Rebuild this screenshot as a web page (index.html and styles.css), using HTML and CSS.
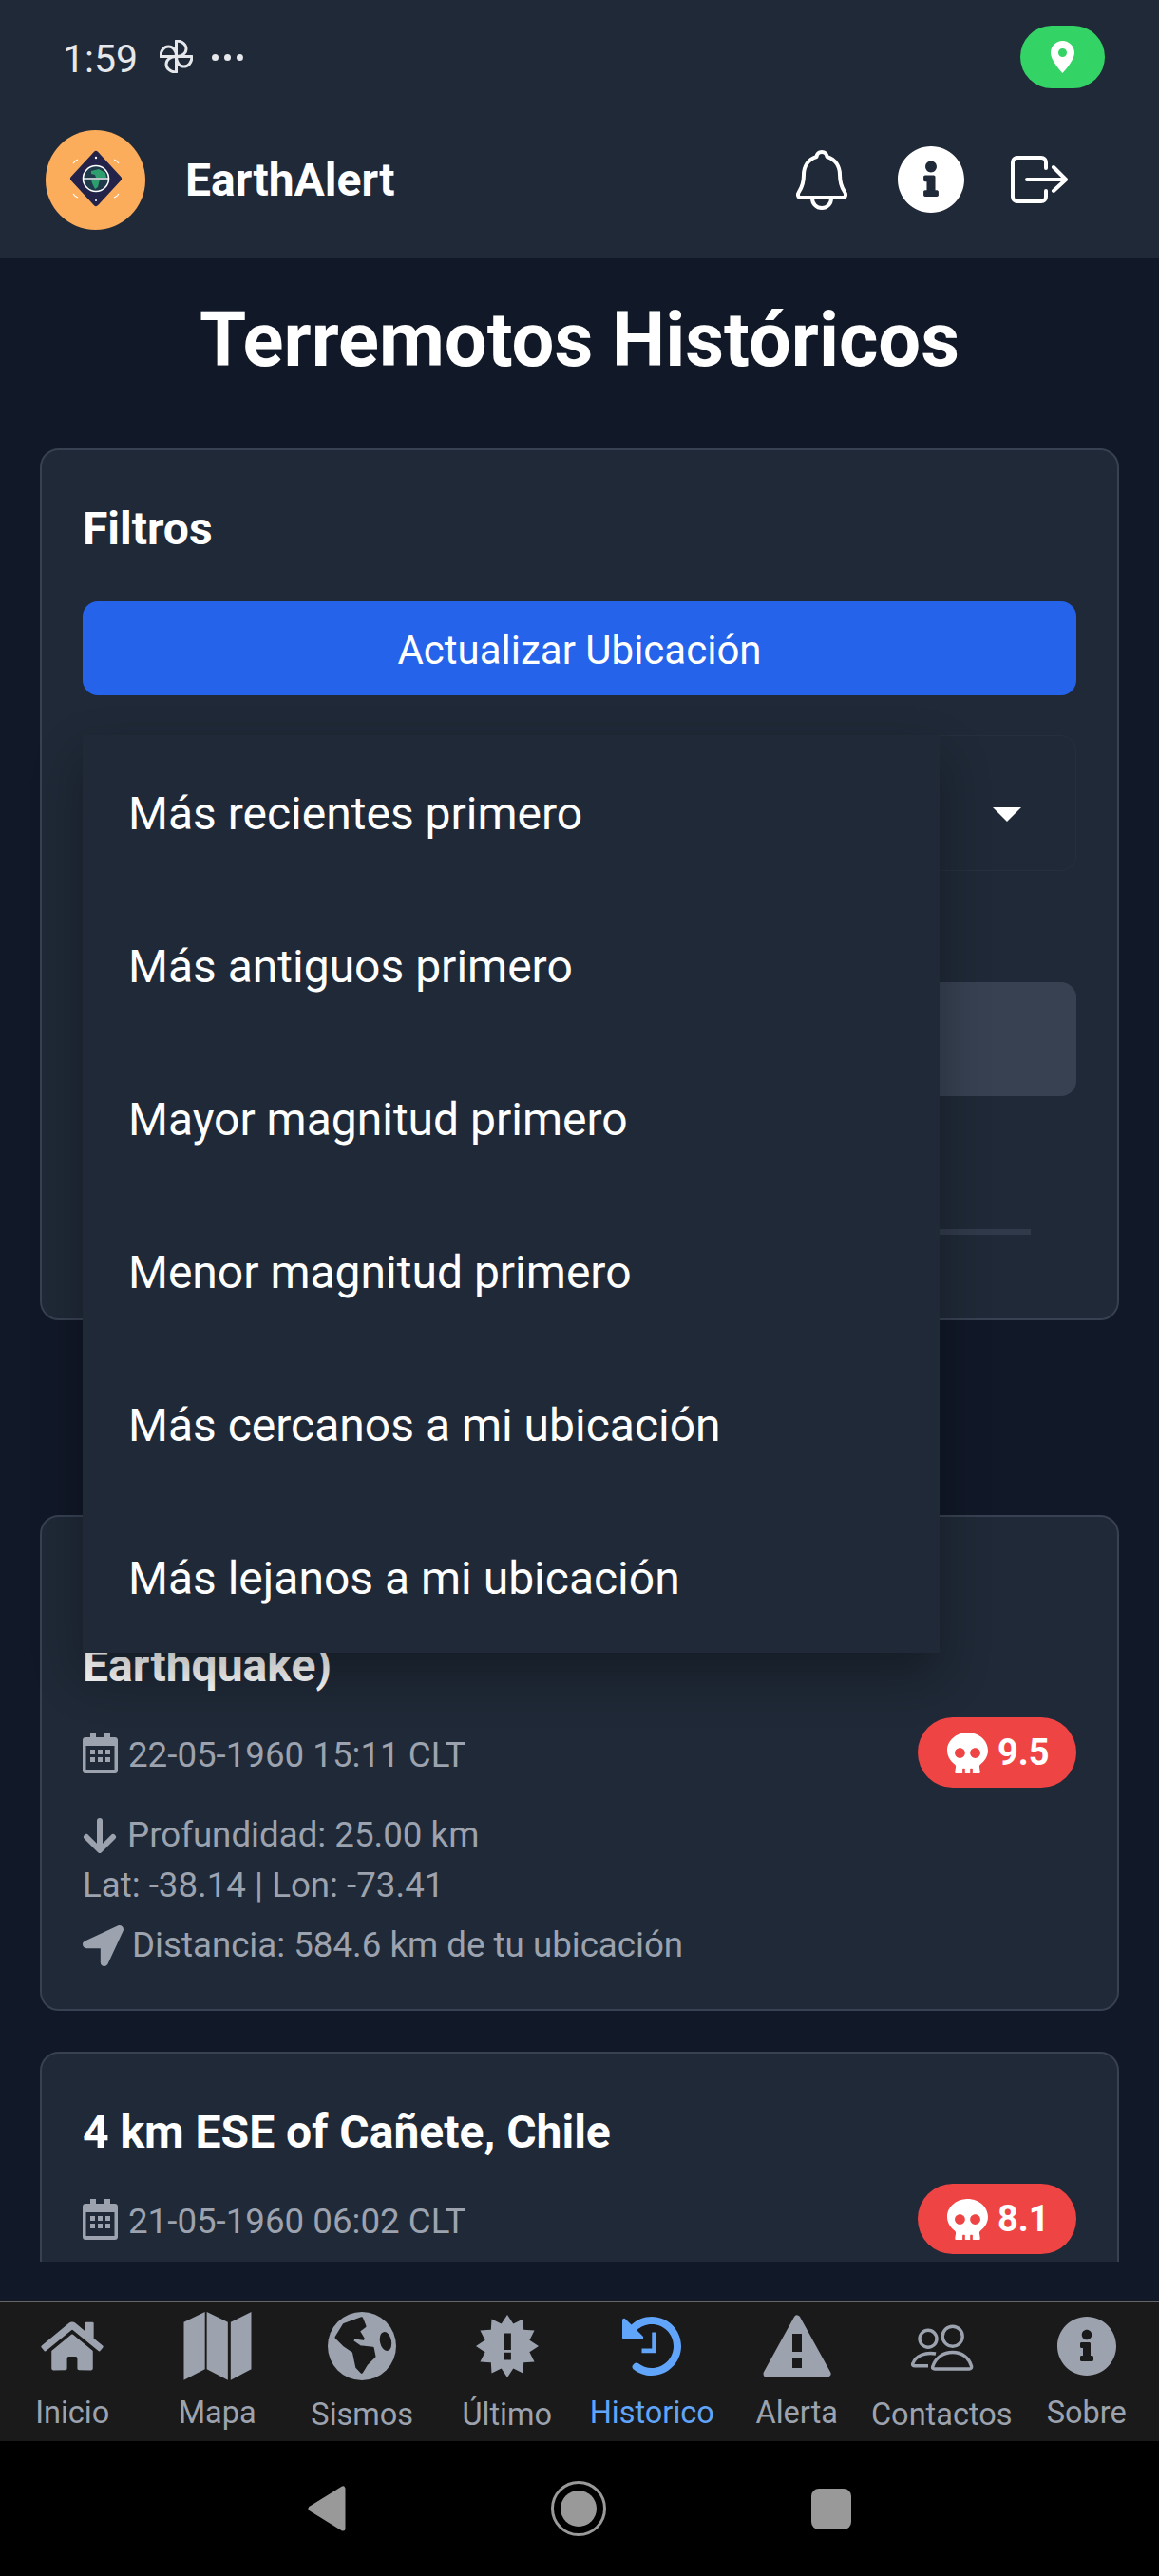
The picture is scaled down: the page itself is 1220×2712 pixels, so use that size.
FILE: index.html
```html
<!DOCTYPE html>
<html lang="es">
<head>
    <meta charset="UTF-8">
    <meta name="viewport" content="width=device-width, initial-scale=1.0">
    <title>EarthAlert</title>
    <link rel="stylesheet" href="styles.css">
</head>
<body>
    <div class="top">
        <!--status bar-->
        <div class="status">
            <span class="status-time">1:59</span>
            <svg class="ic-fan" viewBox="0 0 35 35">
                <path d="M17.500 17.500H34C34 24 30 28 25.700 28C21 28 17.500 24 17.500 17.500Z"/>
                <path transform="rotate(90 17.500 17.500)" d="M17.500 17.500H34C34 24 30 28 25.700 28C21 28 17.500 24 17.500 17.500Z"/>
                <path transform="rotate(180 17.500 17.500)" d="M17.500 17.500H34C34 24 30 28 25.700 28C21 28 17.500 24 17.500 17.500Z"/>
                <path transform="rotate(270 17.500 17.500)" d="M17.500 17.500H34C34 24 30 28 25.700 28C21 28 17.500 24 17.500 17.500Z"/>
            </svg>
            <span class="status-dots"><i></i><i></i><i></i></span>
            <span class="status-pill">
                <svg class="ic-pin" viewBox="0 0 25 34"><path fill-rule="evenodd" d="M12.500 0C5.600 0 0 5.600 0 12.500 0 21 12.500 34 12.500 34S25 21 25 12.500C25 5.600 19.400 0 12.500 0zm0 8a4.500 4.500 0 1 1 0 9 4.500 4.500 0 0 1 0-9z"/></svg>
            </span>
        </div>
        <!--app bar-->
        <header class="appbar">
            <svg class="logo" viewBox="0 0 105 105">
                <circle cx="52.500" cy="52.500" r="52.500" fill="#fbad5c"/>
                <path d="M53 25L77 51L53 77L29 51Z" fill="#23234a" stroke="#23234a" stroke-width="6" stroke-linejoin="round"/>
                <circle cx="53" cy="51" r="13.500" fill="#1f3a4a" stroke="#fff" stroke-width="1.600"/>
                <path d="M48 43l8-2 7 4 1 5H53l-1-3-4-1zM48 52h9l-2 8-3 2-3-6z" fill="#2f9e6e"/>
                <path d="M39.500 51H66.500" stroke="#fff" stroke-width="1.400"/>
                <path d="M29 35q2-3 5-4M72 31q3 1 5 4M29 67q2 3 5 4M72 71q3-1 5-4" fill="none" stroke="#fff" stroke-width="1.200"/>
                <circle cx="53" cy="29" r="1.200" fill="#fff"/>
                <circle cx="53" cy="74" r="1" fill="#fff"/>
            </svg>
            <span class="brand">EarthAlert</span>
            <span class="appbar-actions">
                <svg class="ic-bell" viewBox="0 0 54 63"><path d="M27 2C24 2 22 4 21.500 7 12 10 8 18 8 26c0 8-1 12-5 18-2 3-1 6 2 6h44c3 0 4-3 2-6-4-6-5-10-5-18 0-8-4-16-13.500-19C32 4 30 2 27 2zM17 51a10 10 0 0 0 20 0"/></svg>
                <svg class="ic-info" viewBox="8 8 496 496"><path d="M256 8C119.043 8 8 119.083 8 256c0 136.997 111.043 248 248 248s248-111.003 248-248C504 119.083 392.957 8 256 8zm0 110c23.196 0 42 18.804 42 42s-18.804 42-42 42-42-18.804-42-42 18.804-42 42-42zm56 254c0 6.627-5.373 12-12 12h-88c-6.627 0-12-5.373-12-12v-24c0-6.627 5.373-12 12-12h12v-64h-12c-6.627 0-12-5.373-12-12v-24c0-6.627 5.373-12 12-12h64c6.627 0 12 5.373 12 12v100h12c6.627 0 12 5.373 12 12v24z"/></svg>
                <svg class="ic-logout" viewBox="0 0 60 50"><path d="M37 13V7c0-3-2-5-5-5H7C4 2 2 4 2 7v36c0 3 2 5 5 5h25c3 0 5-2 5-5v-6M17 25h40M45 12l13 13-13 12"/></svg>
            </span>
        </header>
    </div>

    <main class="main">
        <div class="scroll">
            <h1 class="page-title">Terremotos Históricos</h1>

            <!--filters-->
            <section class="card filters">
                <h2 class="filters-title">Filtros</h2>
                <button type="button" class="btn-location">Actualizar Ubicación</button>
                <div class="select"><span class="select-arrow"></span></div>
                <div class="btn-grey"></div>
                <div class="slider"></div>
            </section>

            <!--quake list-->
            <article class="card quake quake-first">
                <h3 class="quake-title">Earthquake)</h3>
                <div class="quake-row">
                    <span class="quake-date">
                        <svg class="ic-cal" viewBox="0 0 37 43"><path fill-rule="evenodd" d="M8 0h6v5h9V0h6v5h5c1.700 0 3 1.300 3 3v32c0 1.700-1.300 3-3 3H3c-1.700 0-3-1.300-3-3V8c0-1.700 1.300-3 3-3h5zM3.500 14v25h30V14z"/><path d="M8 18h5v5H8zM16 18h5v5h-5zM24 18h5v5h-5zM8 26h5v5H8zM16 26h5v5h-5zM24 26h5v5h-5z"/></svg>
                        22-05-1960 15:11 CLT
                    </span>
                    <span class="badge">
                        <svg class="ic-skull" viewBox="0 0 512 512"><path d="M256 0C114.600 0 0 100.300 0 224c0 70.100 36.900 132.600 94.500 173.700 9.600 6.900 15.200 18.100 13.500 29.900l-9.400 66.200c-1.400 9.600 6 18.200 15.700 18.200H192v-56c0-4.400 3.600-8 8-8h16c4.400 0 8 3.600 8 8v56h64v-56c0-4.400 3.600-8 8-8h16c4.400 0 8 3.600 8 8v56h77.700c9.700 0 17.100-8.600 15.700-18.200l-9.400-66.200c-1.700-11.700 3.800-23 13.500-29.900C475.100 356.600 512 294.100 512 224 512 100.300 397.400 0 256 0zm-96 320c-35.300 0-64-28.700-64-64s28.700-64 64-64 64 28.700 64 64-28.700 64-64 64zm192 0c-35.300 0-64-28.700-64-64s28.700-64 64-64 64 28.700 64 64-28.700 64-64 64z"/></svg>
                        9.5
                    </span>
                </div>
                <p class="quake-line quake-depth">
                    <svg class="ic-down" viewBox="0 0 36 37"><path d="M18 3V33M4 20L18 34L32 20"/></svg>
                    Profundidad: 25.00 km
                </p>
                <p class="quake-line quake-coords">Lat: -38.14 | Lon: -73.41</p>
                <p class="quake-line quake-dist">
                    <svg class="ic-plane" viewBox="0 0 512 512"><path d="M444.520 3.520L28.740 195.420c-47.970 22.390-31.980 92.750 19.190 92.750h175.910v175.910c0 51.170 70.360 67.170 92.750 19.190l191.900-415.780c15.990-38.390-25.590-79.970-63.970-63.970z"/></svg>
                    Distancia: 584.6 km de tu ubicación
                </p>
            </article>

            <article class="card quake">
                <h3 class="quake-title">4 km ESE of Cañete, Chile</h3>
                <div class="quake-row">
                    <span class="quake-date">
                        <svg class="ic-cal" viewBox="0 0 37 43"><path fill-rule="evenodd" d="M8 0h6v5h9V0h6v5h5c1.700 0 3 1.300 3 3v32c0 1.700-1.300 3-3 3H3c-1.700 0-3-1.300-3-3V8c0-1.700 1.300-3 3-3h5zM3.500 14v25h30V14z"/><path d="M8 18h5v5H8zM16 18h5v5h-5zM24 18h5v5h-5zM8 26h5v5H8zM16 26h5v5h-5zM24 26h5v5h-5z"/></svg>
                        21-05-1960 06:02 CLT
                    </span>
                    <span class="badge">
                        <svg class="ic-skull" viewBox="0 0 512 512"><path d="M256 0C114.600 0 0 100.300 0 224c0 70.100 36.900 132.600 94.500 173.700 9.600 6.900 15.200 18.100 13.500 29.900l-9.400 66.200c-1.400 9.600 6 18.200 15.700 18.200H192v-56c0-4.400 3.600-8 8-8h16c4.400 0 8 3.600 8 8v56h64v-56c0-4.400 3.600-8 8-8h16c4.400 0 8 3.600 8 8v56h77.700c9.700 0 17.100-8.600 15.700-18.200l-9.400-66.200c-1.700-11.700 3.800-23 13.500-29.900C475.100 356.600 512 294.100 512 224 512 100.300 397.400 0 256 0zm-96 320c-35.300 0-64-28.700-64-64s28.700-64 64-64 64 28.700 64 64-28.700 64-64 64zm192 0c-35.300 0-64-28.700-64-64s28.700-64 64-64 64 28.700 64 64-28.700 64-64 64z"/></svg>
                        8.1
                    </span>
                </div>
            </article>

            <!--sort menu, open over the filters-->
            <ul class="menu">
                <li>Más recientes primero</li>
                <li>Más antiguos primero</li>
                <li>Mayor magnitud primero</li>
                <li>Menor magnitud primero</li>
                <li>Más cercanos a mi ubicación</li>
                <li>Más lejanos a mi ubicación</li>
            </ul>
        </div>
    </main>

    <!--bottom tabs-->
    <nav class="tabs">
        <div class="tab">
            <span class="tab-icon"><svg class="ic-home" viewBox="0 0 576 512"><path d="M280.370 148.260L96 300.110V464a16 16 0 0 0 16 16l112.060-.29a16 16 0 0 0 15.920-16V368a16 16 0 0 1 16-16h64a16 16 0 0 1 16 16v95.640a16 16 0 0 0 16 16.050L464 480a16 16 0 0 0 16-16V300L295.670 148.260a12.190 12.190 0 0 0-15.300 0zM571.600 251.470L488 182.560V44.050a12 12 0 0 0-12-12h-56a12 12 0 0 0-12 12v72.610L318.470 43a48 48 0 0 0-61 0L4.340 251.470a12 12 0 0 0-1.600 16.900l25.500 31A12 12 0 0 0 45.150 301l235.220-193.740a12.190 12.190 0 0 1 15.300 0L530.900 301a12 12 0 0 0 16.900-1.600l25.500-31a12 12 0 0 0-1.700-16.930z"/></svg></span>
            <span class="tab-label">Inicio</span>
        </div>
        <div class="tab">
            <span class="tab-icon"><svg class="ic-map" viewBox="0 0 72 73"><path d="M0 11L22.500 0V61L0 72.700zM24.500 0L47 11V72.700L24.500 61zM50 11L72 0V61L50 72.700z"/></svg></span>
            <span class="tab-label">Mapa</span>
        </div>
        <div class="tab tab-low">
            <span class="tab-icon"><svg class="ic-globe" viewBox="0 0 72 72"><circle cx="36" cy="36" r="36"/><path class="cut" d="M9 26.700L17.300 13.300L35.700 6.700L39 15L32.300 20L37.300 28.300L27.300 26.700L25.700 31L34 36.700L47.300 38.300L49 46.700L40.700 55L35.700 63.300L30.700 58L27.300 41.700L17.300 35Z"/><ellipse class="cut" cx="61" cy="31" rx="4.500" ry="8.500" transform="rotate(-12 61 31)"/></svg></span>
            <span class="tab-label">Sismos</span>
        </div>
        <div class="tab tab-low">
            <span class="tab-icon"><svg class="ic-burst" viewBox="0 0 68 70"><path d="M34 1L40.500 10.900L51 5.600L51.700 17.300L63.400 18L58.100 28.500L68 35L58.100 41.500L63.400 52L51.700 52.700L51 64.400L40.500 59.100L34 69L27.500 59.100L17 64.400L16.300 52.700L4.600 52L9.900 41.500L0 35L9.900 28.500L4.600 18L16.300 17.300L17 5.600L27.500 10.900Z"/><path class="fill-cut" d="M30 21h8v18h-8zM30 42h8v8h-8z"/></svg></span>
            <span class="tab-label">Último</span>
        </div>
        <div class="tab tab-active">
            <span class="tab-icon"><svg class="ic-history" viewBox="8 8 496 496"><path d="M504 255.531c.253 136.640-111.180 248.372-247.820 248.468-59.015.042-113.223-20.530-155.822-54.911-11.077-8.940-11.905-25.541-1.839-35.607l11.267-11.267c8.609-8.609 22.353-9.551 31.891-1.984C173.062 425.135 212.781 440 256 440c101.705 0 184-82.311 184-184 0-101.705-82.311-184-184-184-48.814 0-93.149 18.969-126.068 49.932l50.754 50.754c10.080 10.080 2.941 27.314-11.313 27.314H24c-8.837 0-16-7.163-16-16V38.627c0-14.254 17.234-21.393 27.314-11.314l49.372 49.372C129.209 34.136 189.552 8 256 8c136.810 0 247.747 110.780 248 247.531z"/><path class="hand" d="M277 140V295H172"/></svg></span>
            <span class="tab-label">Historico</span>
        </div>
        <div class="tab">
            <span class="tab-icon"><svg class="ic-alert" viewBox="0 0 72 66"><path d="M36 4L68 62H4Z" stroke-width="7" stroke-linejoin="round" class="tri"/><path class="fill-cut" d="M31 20h10v19H31zM31 46h10v10H31z"/></svg></span>
            <span class="tab-label">Alerta</span>
        </div>
        <div class="tab tab-low">
            <span class="tab-icon"><svg class="ic-people" viewBox="0 0 67 49"><circle cx="19" cy="15.300" r="9"/><circle cx="44.700" cy="12.700" r="10.500"/><path d="M26 47c-2 0-3-1-2-3 3-9 11-14.500 20.700-14.500S62 35 64.500 44c.5 2-.5 3-2.500 3zM27 31C16 29 6 33 3 41c-1 2 0 2.700 2 2.700h14"/></svg></span>
            <span class="tab-label">Contactos</span>
        </div>
        <div class="tab">
            <span class="tab-icon"><svg class="ic-sobre" viewBox="8 8 496 496"><path d="M256 8C119.043 8 8 119.083 8 256c0 136.997 111.043 248 248 248s248-111.003 248-248C504 119.083 392.957 8 256 8zm0 110c23.196 0 42 18.804 42 42s-18.804 42-42 42-42-18.804-42-42 18.804-42 42-42zm56 254c0 6.627-5.373 12-12 12h-88c-6.627 0-12-5.373-12-12v-24c0-6.627 5.373-12 12-12h12v-64h-12c-6.627 0-12-5.373-12-12v-24c0-6.627 5.373-12 12-12h64c6.627 0 12 5.373 12 12v100h12c6.627 0 12 5.373 12 12v24z"/></svg></span>
            <span class="tab-label">Sobre</span>
        </div>
    </nav>

    <!--android buttons-->
    <div class="sysbar">
        <svg class="sys-back" viewBox="0 0 40 48"><path d="M37 3V45L3 24Z"/></svg>
        <svg class="sys-home" viewBox="0 0 58 58"><circle cx="29" cy="29" r="27.500" fill="none" stroke="#999" stroke-width="3"/><circle cx="29" cy="29" r="19" fill="#999"/></svg>
        <span class="sys-square"></span>
    </div>
</body>
</html>
```

FILE: styles.css
```css
* {
    box-sizing: border-box;
}

body {
    margin: 0;
    width: 1220px;
    height: 2712px;
    display: flex;
    flex-direction: column;
    font-family: 'Roboto', sans-serif;
    background-color: #000;
    overflow: hidden;
}

/* top area */
.top {
    height: 272px;
    background-color: #1f2937;
}

.status {
    height: 106px;
    padding: 27px 57px 0 66px;
    display: flex;
    align-items: flex-start;
    color: #e5e7eb;
}

.status-time {
    font-size: 41px;
    line-height: 70px;
}

.ic-fan {
    width: 35px;
    height: 35px;
    margin: 15px 0 0 23px;
    fill: none;
    stroke: #e5e7eb;
    stroke-width: 3;
    stroke-linejoin: round;
}

.status-dots {
    display: flex;
    gap: 6px;
    margin: 30px 0 0 20px;
}

.status-dots i {
    width: 7px;
    height: 7px;
    border-radius: 50%;
    background-color: #e5e7eb;
}

.status-pill {
    margin-left: auto;
    width: 89px;
    height: 66px;
    border-radius: 33px;
    background-color: #34d366;
    display: flex;
    align-items: center;
    justify-content: center;
}

.ic-pin {
    width: 25px;
    height: 34px;
    fill: #fff;
}

.appbar {
    height: 166px;
    padding: 0 96px 0 48px;
    display: flex;
    align-items: center;
}

.logo {
    width: 105px;
    height: 105px;
}

.brand {
    margin-left: 42px;
    font-size: 48px;
    font-weight: 700;
    color: #fff;
}

.appbar-actions {
    margin-left: auto;
    display: flex;
    align-items: center;
}

.ic-bell {
    width: 54px;
    height: 63px;
    fill: none;
    stroke: #fff;
    stroke-width: 4;
    stroke-linejoin: round;
    stroke-linecap: round;
}

.ic-info {
    width: 70px;
    height: 70px;
    margin-left: 53px;
    fill: #fff;
}

.ic-logout {
    width: 60px;
    height: 50px;
    margin-left: 49px;
    fill: none;
    stroke: #fff;
    stroke-width: 4;
    stroke-linejoin: round;
    stroke-linecap: round;
}

/* content */
.main {
    height: 2150px;
    padding-bottom: 41px;
    background-color: #111827;
    display: flex;
}

.scroll {
    flex: 1;
    position: relative;
    overflow: hidden;
    padding: 38px 42px 0;
}

.page-title {
    margin: 0 0 66px;
    font-size: 79.500px;
    line-height: 96px;
    font-weight: 700;
    text-align: center;
    color: #fff;
}

.card {
    background-color: #1f2937;
    border: 2px solid #374151;
    border-radius: 20px;
}

.filters {
    height: 918px;
    padding: 55px 43px 0;
}

.filters-title {
    margin: 0 0 48px;
    font-size: 48px;
    line-height: 56px;
    font-weight: 700;
    color: #fff;
}

.btn-location {
    display: block;
    width: 100%;
    height: 99px;
    padding-top: 4px;
    border: none;
    border-radius: 16px;
    background-color: #2563eb;
    color: #fff;
    font-family: inherit;
    font-size: 42px;
}

.select {
    height: 143px;
    margin-top: 42px;
    padding: 24px 57px 0 0;
    border: 1px solid #252f3d;
    border-radius: 16px;
    display: flex;
    align-items: center;
    justify-content: flex-end;
}

.select-arrow {
    border-top: 15px solid #fff;
    border-left: 15px solid transparent;
    border-right: 15px solid transparent;
}

.btn-grey {
    height: 120px;
    margin-top: 117px;
    border-radius: 16px;
    background-color: #374151;
}

.slider {
    height: 6px;
    margin: 140px 48px 0;
    background-color: #303a4a;
}

.quake {
    margin-top: 43px;
    padding: 46px 43px 45px;
}

.quake-first {
    margin-top: 205px;
    padding-top: 120px;
}

.quake-title {
    margin: 0 0 17px;
    font-size: 48px;
    line-height: 74px;
    font-weight: 700;
    color: #fff;
}

.quake-row {
    display: flex;
    align-items: center;
    justify-content: space-between;
    height: 74px;
}

.quake-date,
.quake-line {
    display: flex;
    align-items: center;
    gap: 11px;
    font-size: 36.700px;
    line-height: 44px;
    color: #9ca3af;
}

.quake-date {
    padding-top: 6px;
}

.quake-line {
    margin: 0;
}

.quake-depth {
    margin-top: 28px;
}

.quake-coords {
    margin-top: 9px;
}

.quake-dist {
    margin-top: 19px;
    gap: 9px;
}

.ic-cal {
    width: 37px;
    height: 43px;
    margin-top: -6px;
    fill: #9ca3af;
}

.ic-down {
    width: 36px;
    height: 37px;
    fill: none;
    stroke: #9ca3af;
    stroke-width: 6;
    stroke-linecap: round;
    stroke-linejoin: round;
}

.ic-plane {
    width: 43px;
    height: 43px;
    fill: #9ca3af;
}

.badge {
    width: 167px;
    height: 74px;
    padding-left: 31px;
    border-radius: 37px;
    background-color: #ef4444;
    display: flex;
    align-items: center;
    gap: 10px;
    font-size: 38px;
    font-weight: 700;
    color: #fff;
}

.ic-skull {
    width: 43px;
    height: 43px;
    fill: #fff;
}

/* dropdown */
.menu {
    position: absolute;
    top: 502px;
    left: 87px;
    width: 902px;
    margin: 0;
    padding: 0;
    list-style: none;
    background-color: #1f2937;
    box-shadow: 0 24px 48px rgba(0, 0, 0, 0.3);
}

.menu li {
    height: 161px;
    padding: 3px 0 0 48px;
    display: flex;
    align-items: center;
    font-size: 48px;
    color: #fff;
}

/* bottom tabs */
.tabs {
    height: 148px;
    border-top: 2px solid #666;
    background-color: #1a1a1a;
    display: flex;
}

.tab {
    flex: 1;
    padding-top: 10px;
    display: flex;
    flex-direction: column;
    align-items: center;
    color: #9ca3af;
}

.tab-icon {
    height: 72px;
    display: flex;
    align-items: center;
    justify-content: center;
}

.tab-icon svg {
    fill: #9ca3af;
}

.tab-label {
    margin-top: 14px;
    font-size: 32.500px;
    line-height: 40px;
}

.tab-low .tab-label {
    margin-top: 16px;
}

.tab-active {
    color: #60a5fa;
}

.tab-active .tab-icon svg {
    fill: #60a5fa;
}

.ic-home {
    width: 66px;
    height: 58px;
}

.ic-map,
.ic-globe {
    width: 72px;
    height: 72px;
}

.ic-burst {
    width: 66px;
    height: 70px;
}

.ic-history,
.ic-sobre {
    width: 62px;
    height: 62px;
}

.ic-alert {
    width: 72px;
    height: 66px;
}

.ic-people {
    width: 67px;
    height: 49px;
    margin-top: 2px;
}

.tab-icon .ic-people {
    fill: none;
    stroke: #9ca3af;
    stroke-width: 3.400;
}

.cut {
    fill: #1a1a1a;
    stroke: #1a1a1a;
    stroke-width: 3;
    stroke-linejoin: round;
}

.fill-cut {
    fill: #1a1a1a;
}

.tri {
    stroke: #9ca3af;
}

.hand {
    fill: none;
    stroke: #60a5fa;
    stroke-width: 38;
}

/* android nav */
.sysbar {
    flex: 1;
    display: flex;
    align-items: center;
    justify-content: center;
    gap: 216px;
}

.sys-back {
    width: 40px;
    height: 48px;
    fill: #999;
    stroke: #999;
    stroke-width: 5;
    stroke-linejoin: round;
}

.sys-home {
    width: 58px;
    height: 58px;
}

.sys-square {
    width: 42px;
    height: 43px;
    border-radius: 8px;
    background-color: #999;
}
```
